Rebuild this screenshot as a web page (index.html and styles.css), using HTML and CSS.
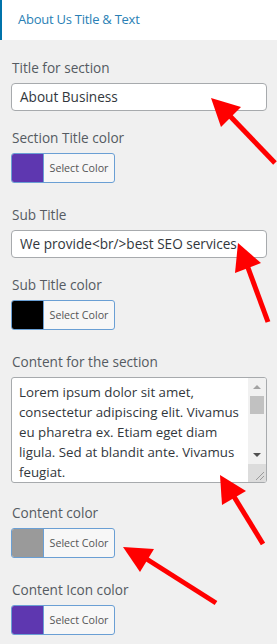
FILE: index.html
```html
<!DOCTYPE html>
<html lang="en">
<head>
<meta charset="utf-8">
<title>About Us Title &amp; Text</title>
<link rel="stylesheet" href="styles.css">
</head>
<body>
<div class="panel">
  <div class="panel-head">About Us Title &amp; Text</div>
  <div class="panel-body">
    <div class="field">
      <label class="label">Title for section</label>
      <div class="input">About Business</div>
    </div>
    <div class="field field-btn">
      <label class="label">Section Title color</label>
      <div class="color-btn"><span class="swatch swatch-purple"></span><span class="btn-text">Select Color</span></div>
    </div>
    <div class="field">
      <label class="label">Sub Title</label>
      <div class="input">We provide&lt;br/&gt;best SEO services</div>
    </div>
    <div class="field field-btn">
      <label class="label">Sub Title color</label>
      <div class="color-btn"><span class="swatch swatch-black"></span><span class="btn-text">Select Color</span></div>
    </div>
    <div class="field field-area">
      <label class="label">Content for the section</label>
      <div class="textarea">
        <div class="textarea-text">Lorem ipsum dolor sit amet,<br>consectetur adipiscing elit. Vivamus<br>eu pharetra ex. Etiam eget diam<br>ligula. Sed at blandit ante. Vivamus<br>feugiat.</div>
        <div class="scrollbar">
          <span class="sb-up"></span>
          <span class="sb-thumb"></span>
          <span class="sb-track"></span>
          <span class="sb-down"></span>
          <span class="sb-corner">
            <svg width="18" height="18" viewBox="0 0 18 18"><path d="M16 8 L8 16 M16 12 L12 16" stroke="#9a9a9a" stroke-width="1" fill="none"/></svg>
          </span>
        </div>
      </div>
    </div>
    <div class="field field-btn">
      <label class="label">Content color</label>
      <div class="color-btn"><span class="swatch swatch-grey"></span><span class="btn-text">Select Color</span></div>
    </div>
    <div class="field field-btn">
      <label class="label">Content Icon color</label>
      <div class="color-btn"><span class="swatch swatch-purple"></span><span class="btn-text">Select Color</span></div>
    </div>
  </div>
</div>
<svg class="arrows" width="277" height="644" viewBox="0 0 277 644">
  <g fill="#ff0000" stroke="#ff0000">
    <line x1="275" y1="163" x2="229" y2="115" stroke-width="5"/>
    <polygon points="211,98 221,127 241,107" stroke="none"/>
    <line x1="268" y1="322" x2="247" y2="265" stroke-width="5"/>
    <polygon points="238,243 235,273 261,263" stroke="none"/>
    <line x1="263" y1="544" x2="233" y2="495" stroke-width="5"/>
    <polygon points="220,475 222,505 246,491" stroke="none"/>
    <line x1="216" y1="603" x2="145" y2="558" stroke-width="5"/>
    <polygon points="123,547 140,572 154,549" stroke="none"/>
  </g>
</svg>
</body>
</html>
```
FILE: styles.css
```css
html, body {
  margin: 0;
  padding: 0;
}
body {
  background: #f0f0f0;
  font-family: "Open Sans", "Noto Sans", sans-serif;
  color: #555d66;
  width: 277px;
  height: 644px;
  overflow: hidden;
  position: relative;
}
.panel-head {
  height: 40px;
  box-sizing: border-box;
  background: #fff;
  border-left: 2px solid #0073aa;
  padding-left: 16px;
  font-size: 13px;
  letter-spacing: -0.25px;
  line-height: 38px;
  color: #2a7fb5;
}
.panel-body {
  padding: 18px 10px 0 11px;
  display: flex;
  flex-direction: column;
}
.field {
  display: flex;
  flex-direction: column;
  margin-bottom: 17px;
}
.field-btn {
  margin-bottom: 22px;
}
.field-area {
  margin-bottom: 20px;
}
.label {
  display: block;
  font-size: 13.6px;
  line-height: 20px;
  margin-bottom: 5px;
  padding-left: 1px;
  color: #555b62;
}
.input {
  height: 28px;
  box-sizing: border-box;
  background: #fff;
  border: 1px solid #a7aaad;
  border-radius: 4px;
  padding: 0 8px;
  font-size: 13.6px;
  line-height: 26px;
  color: #32373c;
  white-space: nowrap;
  overflow: hidden;
}
.color-btn {
  display: flex;
  width: 104px;
  height: 30px;
  box-sizing: border-box;
  border: 1px solid #6a9fd4;
  border-radius: 3px;
  background: #f7f7f7;
  overflow: hidden;
}
.swatch {
  width: 31px;
  flex: none;
  border-right: 1px solid #6a9fd4;
}
.swatch-purple { background: #5e37b0; }
.swatch-black { background: #000; }
.swatch-grey { background: #9a9a9a; }
.btn-text {
  flex: 1;
  font-size: 10.7px;
  line-height: 28px;
  text-align: center;
  color: #555;
}
.textarea {
  display: flex;
  height: 106px;
  box-sizing: border-box;
  background: #fff;
  border: 1px solid #a7aaad;
  border-radius: 3px;
  overflow: hidden;
}
.textarea-text {
  flex: 1;
  padding: 4px 0 0 7px;
  font-size: 13.3px;
  line-height: 20px;
  color: #32373c;
  white-space: nowrap;
  overflow: hidden;
}
.scrollbar {
  width: 18px;
  flex: none;
  display: flex;
  flex-direction: column;
  background: #f1f1f1;
}
.sb-up {
  height: 18px;
  flex: none;
  position: relative;
}
.sb-up::after {
  content: "";
  position: absolute;
  left: 5px;
  top: 7px;
  border-left: 4px solid transparent;
  border-right: 4px solid transparent;
  border-bottom: 4px solid #a3a3a3;
}
.sb-thumb {
  height: 18px;
  margin: 0 2px;
  background: #c1c1c1;
  flex: none;
}
.sb-track {
  flex: 1;
}
.sb-down {
  height: 18px;
  flex: none;
  position: relative;
}
.sb-down::after {
  content: "";
  position: absolute;
  left: 5px;
  top: 7px;
  border-left: 4px solid transparent;
  border-right: 4px solid transparent;
  border-top: 4px solid #505050;
}
.sb-corner {
  height: 18px;
  flex: none;
  background: #dcdcdc;
  display: block;
}
.sb-corner svg {
  display: block;
}
.arrows {
  position: absolute;
  left: 0;
  top: 0;
  pointer-events: none;
}
```
